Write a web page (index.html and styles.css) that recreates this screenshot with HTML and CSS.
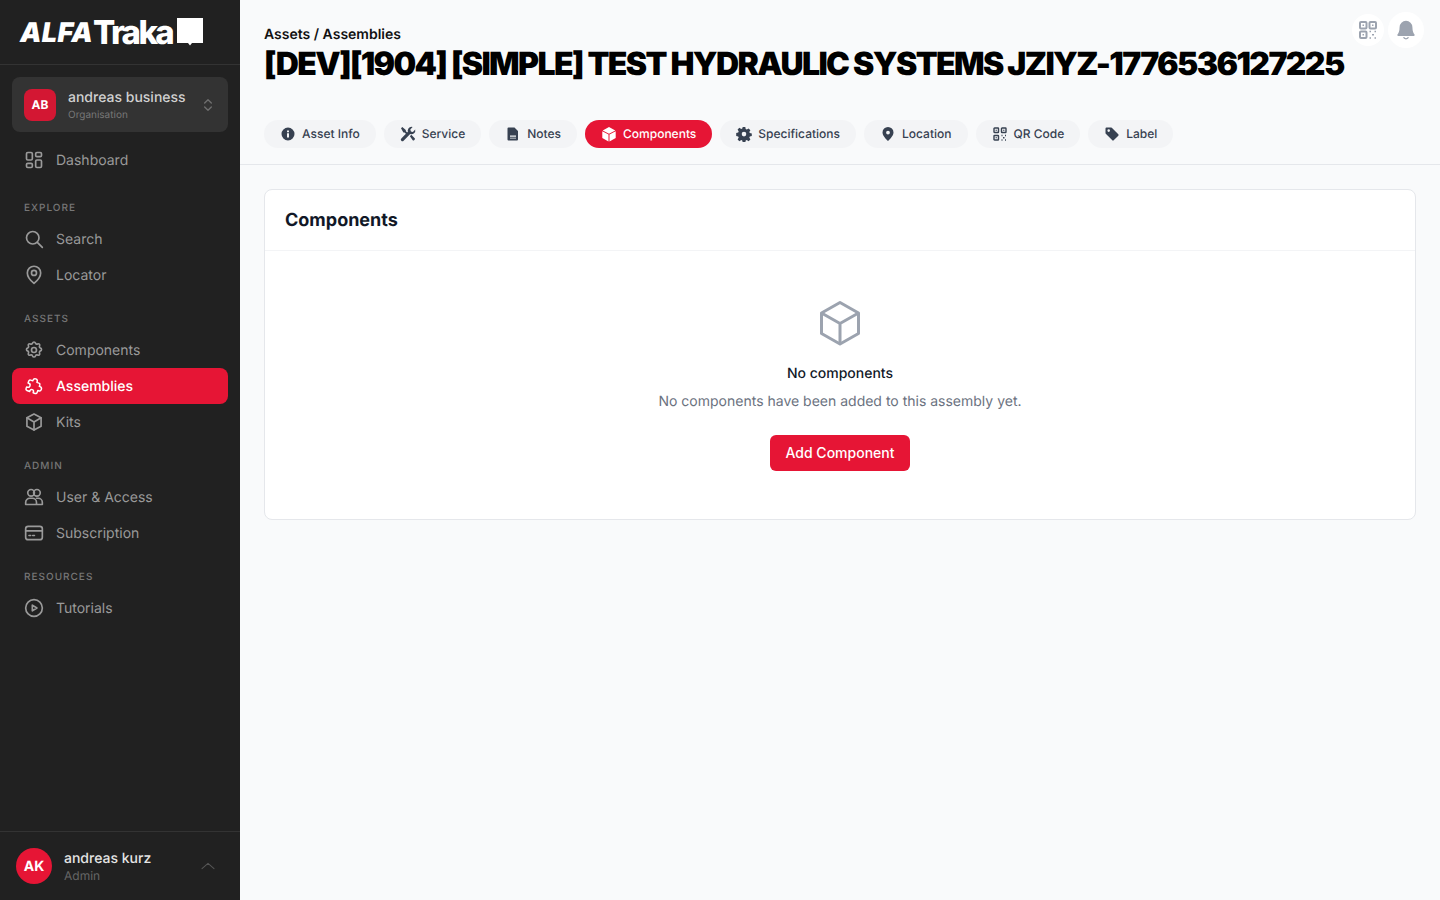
FILE: index.html
```html
<!DOCTYPE html>
<html lang="en">
<head>
<meta charset="utf-8">
<title>Assemblies</title>
<link rel="stylesheet" href="styles.css">
</head>
<body>
<div class="app">
  <aside class="sidebar">
    <div class="brand">
      <span class="logo-alfa">ALFA</span><span class="logo-traka">Traka</span>
      <svg class="logo-flag" width="26" height="29" viewBox="0 0 26 29"><path fill="#fff" d="M0 0h26v25H15l-2 2.500-2-2.500H0z"/></svg>
    </div>
    <div class="org">
      <span class="org-badge">AB</span>
      <span class="org-text"><span class="org-name">andreas business</span><span class="org-sub">Organisation</span></span>
      <svg class="org-chev" width="16" height="16" viewBox="0 0 24 24" fill="none" stroke="#6f6f6f" stroke-width="2" stroke-linecap="round" stroke-linejoin="round"><path d="m7 9 5-5 5 5M7 15l5 5 5-5"/></svg>
    </div>
    <nav class="nav">
      <a class="item dash"><svg class="ic" viewBox="0 0 24 24"><rect x="3" y="3" width="7" height="9" rx="1.500"/><rect x="14" y="3" width="7" height="5" rx="1.500"/><rect x="14" y="12" width="7" height="9" rx="1.500"/><rect x="3" y="16" width="7" height="5" rx="1.500"/></svg>Dashboard</a>
      <div class="group">EXPLORE</div>
      <a class="item"><svg class="ic" viewBox="0 0 24 24"><circle cx="10.500" cy="10.500" r="7.500"/><path d="m16 16 6 6"/></svg>Search</a>
      <a class="item"><svg class="ic" viewBox="0 0 24 24"><path d="M12 22s-8-6.500-8-12.500a8 8 0 0 1 16 0C20 15.500 12 22 12 22z"/><circle cx="12" cy="9.500" r="3"/></svg>Locator</a>
      <div class="group">ASSETS</div>
      <a class="item"><svg class="ic" viewBox="0 0 24 24"><circle cx="12" cy="12" r="3"/><path d="M10.300 3.600a1.800 1.800 0 0 1 3.400 0 1.800 1.800 0 0 0 2.600 1.100 1.800 1.800 0 0 1 2.400 2.400 1.800 1.800 0 0 0 1.100 2.600 1.800 1.800 0 0 1 0 3.400 1.800 1.800 0 0 0-1.100 2.600 1.800 1.800 0 0 1-2.400 2.400 1.800 1.800 0 0 0-2.600 1.100 1.800 1.800 0 0 1-3.400 0 1.800 1.800 0 0 0-2.600-1.100 1.800 1.800 0 0 1-2.400-2.400 1.800 1.800 0 0 0-1.100-2.600 1.800 1.800 0 0 1 0-3.400 1.800 1.800 0 0 0 1.100-2.600 1.800 1.800 0 0 1 2.400-2.400 1.800 1.800 0 0 0 2.600-1.100z"/></svg>Components</a>
      <a class="item active"><svg class="ic" viewBox="0 0 24 24"><path transform="rotate(20 12 12) translate(12 12) scale(-.88 .88) translate(-11 -12)" d="M9 6V5a3 3 0 0 1 6 0v1h3a2 2 0 0 1 2 2v3h-1a2.800 2.800 0 0 0 0 5.600h1V19a2 2 0 0 1-2 2h-4v-1a2.500 2.500 0 0 0-5 0v1H6a2 2 0 0 1-2-2v-3H3a3 3 0 0 1 0-6h1V8a2 2 0 0 1 2-2z"/></svg>Assemblies</a>
      <a class="item"><svg class="ic" viewBox="0 0 24 24"><path d="M12 2.500 20.500 7v10L12 21.500 3.500 17V7z"/><path d="m3.500 7 8.500 5 8.500-5M12 12v9.500"/></svg>Kits</a>
      <div class="group">ADMIN</div>
      <a class="item"><svg class="ic" viewBox="0 0 24 24"><circle cx="8.500" cy="7" r="4"/><circle cx="15.500" cy="7" r="4"/><path d="M2 21v-2.500a5 5 0 0 1 5-5h3a5 5 0 0 1 5 5V21zM15 13.500h2a5 5 0 0 1 5 5V21h-7"/></svg>User &amp; Access</a>
      <a class="item"><svg class="ic" viewBox="0 0 24 24"><rect x="2" y="4" width="20" height="16" rx="3"/><path d="M2 9.500h20M6 15h2M10.500 15h2"/></svg>Subscription</a>
      <div class="group">RESOURCES</div>
      <a class="item"><svg class="ic" viewBox="0 0 24 24"><circle cx="12" cy="12" r="10"/><path d="m10 8.500 5.500 3.500-5.500 3.500z"/></svg>Tutorials</a>
    </nav>
    <div class="user">
      <span class="user-badge">AK</span>
      <span class="user-text"><span class="user-name">andreas kurz</span><span class="user-role">Admin</span></span>
      <svg class="user-chev" width="16" height="16" viewBox="0 0 24 24" fill="none" stroke="#555" stroke-width="1.600" stroke-linecap="round" stroke-linejoin="round"><path d="m3 16 9-8 9 8"/></svg>
    </div>
  </aside>
  <main class="main">
    <header class="head">
      <div class="actions">
        <span class="round small"><svg width="20" height="20" viewBox="0 0 20 20" fill="none" stroke="#9ca3af" stroke-width="2"><rect x="2" y="2" width="6.500" height="6.500" rx="1"/><rect x="11.500" y="2" width="6.500" height="6.500" rx="1"/><rect x="2" y="11.500" width="6.500" height="6.500" rx="1"/><path d="M5.250 4.500v1.500M14.750 4.500v1.500M5.250 14v1.500" stroke-width="1.500"/><path d="M11.500 11.500h1.500M16.500 11.500H18M14 14.700h2M11.500 18H13M16.500 18H18" stroke-width="1.500"/></svg></span>
        <span class="round"><svg width="22" height="22" viewBox="0 0 24 24" fill="#9ca3af"><path d="M12 2a7 7 0 0 0-7 7c0 4.500-1.300 6.700-2.300 8-.4.600 0 1.500.8 1.500h17c.8 0 1.200-.9.800-1.500-1-1.300-2.300-3.500-2.300-8a7 7 0 0 0-7-7z"/><path d="M8.500 20a3.800 3.800 0 0 0 7 0h-1.900a2 2 0 0 1-3.200 0z"/></svg></span>
      </div>
      <div class="crumb">Assets / Assemblies</div>
      <h1 class="title">[DEV][1904] [SIMPLE] TEST HYDRAULIC SYSTEMS JZIYZ-1776536127225</h1>
      <div class="tabs">
        <a class="tab"><svg class="ti" viewBox="0 0 16 16"><path fill-rule="evenodd" d="M8 1.500a6.500 6.500 0 1 0 0 13 6.500 6.500 0 0 0 0-13zM7 4.500h2v1.800H7zM7 7.300h2v4.300H7z"/></svg>Asset Info</a>
        <a class="tab"><svg class="ti" viewBox="0 0 16 16"><path d="M11.500.8a3.800 3.800 0 0 0-3.600 5L1.300 12.400a1.600 1.600 0 0 0 2.300 2.300l6.600-6.600a3.800 3.800 0 0 0 5-4.500L12.900 6l-2-.6-.6-2L12.600 1a3.800 3.800 0 0 0-1.100-.2z"/><path d="M1 2.200 2.300 1l3.500 3 .1 1.200 2 2-1.300 1.300-2-2-1.200-.1zM9.900 10.200l1.400-1.400 3.400 3.400a1 1 0 0 1 0 1.400l-.6.600a1 1 0 0 1-1.400 0z"/></svg>Service</a>
        <a class="tab"><svg class="ti" viewBox="0 0 16 16"><path fill-rule="evenodd" d="M3.500 1.500h6l3.500 3.500v8.500a1 1 0 0 1-1 1H3.500a1 1 0 0 1-1-1v-11a1 1 0 0 1 1-1zM5 9.500v1.300h6V9.500zM5 11.800v.7h6v-.7z"/></svg>Notes</a>
        <a class="tab on"><svg class="ti" viewBox="0 0 16 16"><path d="M8 1 14.300 4.400 8 7.700 1.700 4.400zM1.300 5.300l6.200 3.300v6.900l-6.200-3.400zM14.700 5.300l-6.200 3.300v6.900l6.200-3.400z"/></svg>Components</a>
        <a class="tab"><svg class="ti" viewBox="0 0 16 16"><path fill-rule="evenodd" d="M6.700 1h2.600l.4 2 1.100.5 1.800-1.100 1.800 1.800-1.100 1.800.5 1.100 2 .4v2.600l-2 .4-.5 1.100 1.100 1.800-1.800 1.800-1.800-1.100-1.100.5-.4 2H6.700l-.4-2-1.100-.5-1.800 1.100-1.800-1.800 1.100-1.800-.5-1.100-2-.4V6.900l2-.4.5-1.100L1.600 3.600l1.800-1.800 1.800 1.100 1.100-.5zM8 5.800a2.300 2.300 0 1 0 0 4.600 2.300 2.300 0 0 0 0-4.600z"/></svg>Specifications</a>
        <a class="tab"><svg class="ti" viewBox="0 0 16 16"><path fill-rule="evenodd" d="M8 1a5.500 5.500 0 0 0-5.500 5.500C2.500 10.300 8 15 8 15s5.500-4.700 5.500-8.500A5.500 5.500 0 0 0 8 1zm0 3.700a1.900 1.900 0 1 1 0 3.800 1.900 1.900 0 0 1 0-3.800z"/></svg>Location</a>
        <a class="tab"><svg class="ti qr" viewBox="0 0 16 16"><rect x="2" y="2" width="4.500" height="4.500" rx=".6"/><rect x="9.500" y="2" width="4.500" height="4.500" rx=".6"/><rect x="2" y="9.500" width="4.500" height="4.500" rx=".6"/><path d="M4.250 3.800v.9M11.750 3.800v.9M4.250 11.300v.9M9.500 9.500h1M13 9.500h1M11 11.800h1.500M9.500 14h1M13 14h1"/></svg>QR Code</a>
        <a class="tab"><svg class="ti" viewBox="0 0 16 16"><path fill-rule="evenodd" d="M1.500 2.500a1 1 0 0 1 1-1h4.600a1 1 0 0 1 .7.300l6.500 6.500a1 1 0 0 1 0 1.400l-4.600 4.600a1 1 0 0 1-1.400 0L1.800 7.800a1 1 0 0 1-.3-.7zM4.700 3.300a1.300 1.300 0 1 0 0 2.600 1.300 1.300 0 0 0 0-2.600z"/></svg>Label</a>
      </div>
    </header>
    <section class="content">
      <div class="card">
        <h2 class="card-title">Components</h2>
        <div class="empty">
          <svg class="empty-ic" width="48" height="48" viewBox="0 0 48 48" fill="none" stroke="#9ca3af" stroke-width="3" stroke-linejoin="round"><path d="M24 3.500 42.500 14v20.500L24 45 5.500 34.500V14z"/><path d="M5.500 14 24 24.500 42.500 14M24 24.500V45"/></svg>
          <div class="empty-title">No components</div>
          <p class="empty-text">No components have been added to this assembly yet.</p>
          <button class="btn">Add Component</button>
        </div>
      </div>
    </section>
  </main>
</div>
</body>
</html>
```
FILE: styles.css
```css
* { box-sizing: border-box; }
html, body { margin: 0; height: 100%; }
body { font-family: Inter, "Liberation Sans", sans-serif; background: #f9fafb; color: #111827; text-rendering: geometricPrecision; -webkit-font-smoothing: antialiased; }
.app { display: flex; height: 900px; overflow: hidden; }

.sidebar { width: 240px; flex: none; background: #212121; display: flex; flex-direction: column; }
.brand { height: 65px; flex: none; display: flex; align-items: flex-start; padding: 14px 0 0 20px; border-bottom: 1px solid #333; color: #fff; }
.logo-alfa { font-size: 27px; line-height: 36px; font-weight: 900; font-style: italic; letter-spacing: .4px; margin-top: 1px; }
.logo-traka { font-size: 33px; line-height: 36px; font-weight: 800; letter-spacing: -2.600px; }
.logo-flag { margin: 4px 0 0 5px; }
.org { margin: 12px 12px 0; height: 55px; flex: none; background: #333; border-radius: 8px; display: flex; align-items: center; padding: 0 12px; }
.org-badge { width: 32px; height: 32px; background: #d31733; color: #fff; border-radius: 8px; font-size: 12px; font-weight: 700; display: flex; align-items: center; justify-content: center; flex: none; }
.org-text { margin-left: 12px; display: flex; flex-direction: column; flex: 1; }
.org-name { font-size: 14px; line-height: 20px; color: #d1d1d1; font-weight: 500; }
.org-sub { font-size: 10px; line-height: 14px; color: #777; }
.org-chev { flex: none; }
.nav { flex: 1; padding: 10px 12px 0; display: flex; flex-direction: column; }
.item { height: 36px; flex: none; display: flex; align-items: center; gap: 12px; padding: 0 12px; border-radius: 8px; font-size: 14px; color: #9a9a9a; }
.item.active { background: #e61535; color: #fff; font-weight: 500; }
.ic { width: 20px; height: 20px; flex: none; fill: none; stroke: currentColor; stroke-width: 2; stroke-linecap: round; stroke-linejoin: round; }
.group { font-size: 10px; line-height: 14px; height: 14px; letter-spacing: 1px; font-weight: 500; color: #777; padding-left: 12px; margin: 19px 0 6px; flex: none; }
.dash + .group { margin-top: 23px; }
.user { height: 69px; flex: none; border-top: 1px solid #333; display: flex; align-items: center; padding: 0 16px; }
.user-badge { width: 36px; height: 36px; border-radius: 50%; background: #e61535; color: #fff; font-size: 14px; font-weight: 700; display: flex; align-items: center; justify-content: center; flex: none; }
.user-text { margin-left: 12px; display: flex; flex-direction: column; flex: 1; }
.user-name { font-size: 14px; line-height: 20px; font-weight: 500; color: #e5e5e5; margin-top: 1px; }
.user-role { font-size: 12px; line-height: 16px; color: #666; margin-bottom: 1px; margin-top: -1px; }
.user-chev { margin-right: 8px; }

.main { flex: 1; min-width: 0; display: flex; flex-direction: column; }
.head { height: 165px; flex: none; padding: 24px 24px 0; border-bottom: 1px solid #e5e7eb; position: relative; }
.crumb { font-size: 14px; line-height: 20px; font-weight: 600; color: #111; padding-top: 1px; margin-bottom: -1px; }
.title { margin: 0; font-size: 32px; line-height: 40px; font-weight: 900; color: #000; letter-spacing: -1.630px; white-space: nowrap; }
.actions { position: absolute; top: 12px; right: 16px; display: flex; align-items: center; gap: 4px; }
.round { width: 36px; height: 36px; border-radius: 50%; background: #fff; display: flex; align-items: center; justify-content: center; }
.round.small { width: 32px; height: 32px; }
.tabs { display: flex; gap: 8px; margin-top: 36px; }
.tab { height: 28px; display: flex; align-items: center; gap: 6px; padding: 0 16px 1px; border-radius: 14px; background: #f3f4f6; color: #374151; font-size: 12px; font-weight: 500; }
.tab.on { background: #e61535; color: #fff; }
.ti { width: 16px; height: 16px; fill: currentColor; flex: none; }
.ti.qr { fill: none; stroke: currentColor; stroke-width: 1.400; }

.content { padding: 24px; }
.card { background: #fff; border: 1px solid #e5e7eb; border-radius: 8px; height: 331px; }
.card-title { margin: 0; height: 61px; padding: 0 20px; display: flex; align-items: center; font-size: 18px; font-weight: 700; color: #111827; border-bottom: 1px solid #f3f4f6; }
.empty { display: flex; flex-direction: column; align-items: center; padding-top: 48px; }
.empty-ic { display: block; }
.empty-title { margin-top: 17px; font-size: 14px; line-height: 20px; font-weight: 500; color: #111827; }
.empty-text { margin: 8px 0 0; font-size: 14px; line-height: 20px; color: #6b7280; }
.btn { margin-top: 23px; width: 140px; height: 36px; border: 0; border-radius: 6px; background: #e61535; color: #fff; font: 500 14px/20px Inter, "Liberation Sans", sans-serif; }
```
